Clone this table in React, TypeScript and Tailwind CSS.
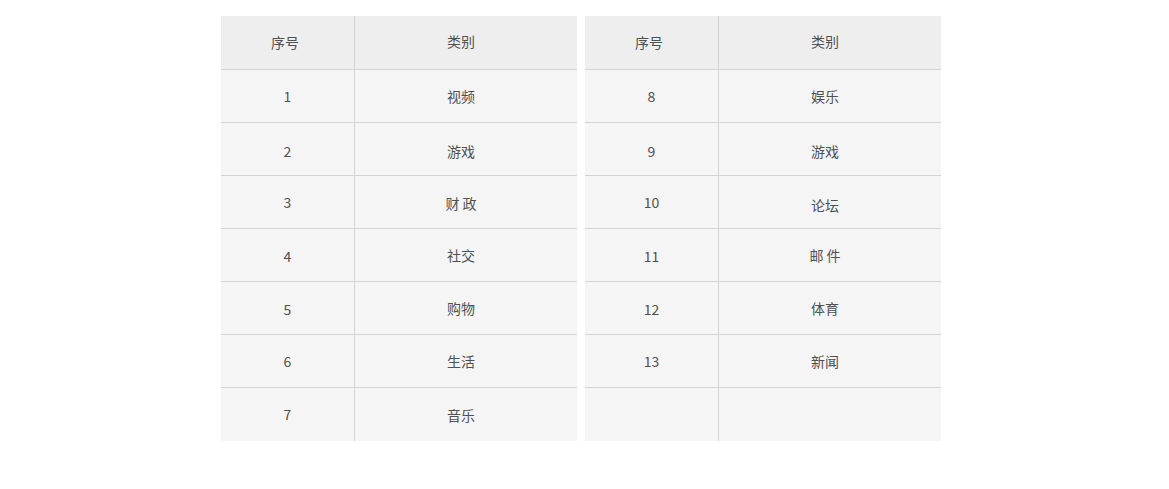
import React from 'react';

// [序号, 类别, 序号偏移, 类别偏移]
const left: [string, string, string, string][] = [
  ['1', '视频', '', ''],
  ['2', '游戏', 'pt-[5px]', 'pt-[5px]'],
  ['3', '财 政', '', 'pt-[2px]'],
  ['4', '社交', 'pt-[2px]', ''],
  ['5', '购物', 'pt-[3px]', 'pt-[1px]'],
  ['6', '生活', '', ''],
  ['7', '音乐', '', 'pt-[2px]'],
];

const right: [string, string, string, string][] = [
  ['8', '娱乐', '', ''],
  ['9', '游戏', 'pt-[5px]', 'pt-[5px]'],
  ['10', '论坛', '', 'pt-[7px]'],
  ['11', '邮 件', 'pt-[2px]', ''],
  ['12', '体育', 'pt-[3px]', ''],
  ['13', '新闻', '', ''],
  ['', '', '', ''],
];

function CategoryTable({ rows }: { rows: [string, string, string, string][] }) {
  return (
    <div className="w-[356px] text-[14px] text-[#505050]">
      <div className="flex h-[54px] bg-[#eeeeee] border-b border-[#d4d4d4]">
        <div className="w-[134px] border-r border-[#d4d4d4] flex items-center justify-center pr-[5px]">序号</div>
        <div className="flex-1 flex items-center justify-center pr-[10px] pb-[2px]">类别</div>
      </div>
      {rows.map((r, i) => (
        <div
          key={i}
          className={
            'flex h-[53px] bg-[#f5f5f5] ' + (i < rows.length - 1 ? 'border-b border-[#d4d4d4]' : '')
          }
        >
          <div className={'w-[134px] border-r border-[#d4d4d4] flex items-center justify-center ' + r[2]}>
            {r[0]}
          </div>
          <div className={'flex-1 flex items-center justify-center pr-[10px] ' + r[3]}>{r[1]}</div>
        </div>
      ))}
    </div>
  );
}

export default function App() {
  return (
    <div
      className="min-h-screen bg-white pt-4 pl-[221px]"
      style={{ fontFamily: '"Noto Sans CJK SC", "Noto Sans", sans-serif' }}
    >
      <div className="flex gap-2">
        <CategoryTable rows={left} />
        <CategoryTable rows={right} />
      </div>
    </div>
  );
}
